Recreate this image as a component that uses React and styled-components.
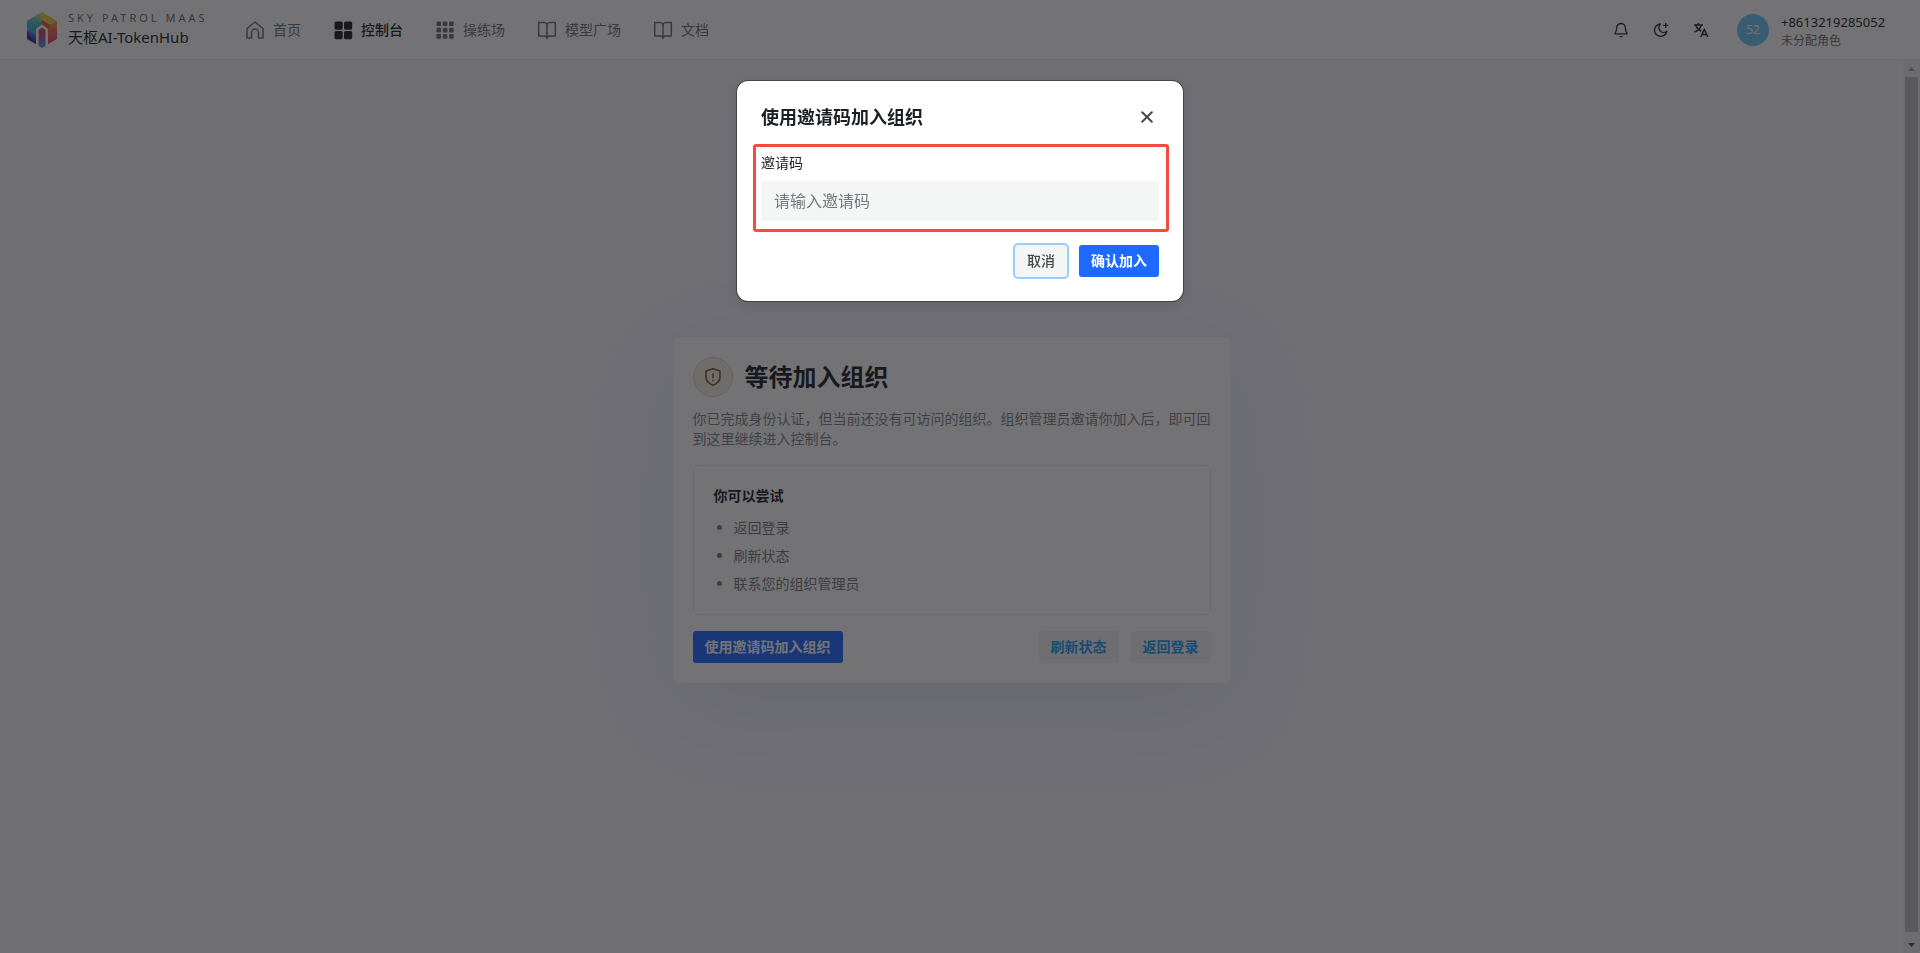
import React from 'react';
import styled, { createGlobalStyle } from 'styled-components';

const GlobalStyle = createGlobalStyle`
  * {
    box-sizing: border-box;
  }

  html,
  body {
    margin: 0;
    height: 100%;
    overflow: hidden;
  }

  #root {
    height: 100%;
  }

  body,
  button,
  input {
    font-family: 'Noto Sans', 'Noto Sans CJK SC', sans-serif;
  }

  body {
    font-size: 14px;
    line-height: 20px;
    color: #1c1f23;
    background: #f4f4fb;
  }
`;

const Page = styled.div`
  height: 100vh;
  display: flex;
  flex-direction: column;
`;

const Header = styled.header`
  height: 60px;
  flex: none;
  display: flex;
  align-items: center;
  justify-content: space-between;
  padding: 0 32px 0 24px;
  background: #fff;
  border-bottom: 1px solid #eaeaf2;
`;

const HeaderLeft = styled.div`
  display: flex;
  align-items: center;
`;

const Brand = styled.a`
  width: 221px;
  display: flex;
  align-items: center;
  gap: 8px;
  color: inherit;
  text-decoration: none;
`;

const BrandText = styled.span`
  display: flex;
  flex-direction: column;
  padding-bottom: 2px;
  white-space: nowrap;
`;

const BrandTag = styled.span`
  font-size: 11px;
  line-height: 16px;
  letter-spacing: 3px;
  color: #6b6c70;
`;

const BrandName = styled.span`
  font-size: 15px;
  line-height: 22px;
`;

const Nav = styled.nav`
  display: flex;
  align-items: center;
  gap: 32px;
`;

const NavItem = styled.a`
  display: flex;
  align-items: center;
  gap: 8px;
  color: ${({ $active }) => ($active ? '#1c1f23' : '#6e7074')};
  font-weight: ${({ $active }) => ($active ? 500 : 400)};
  text-decoration: none;
`;

const HeaderRight = styled.div`
  display: flex;
  align-items: center;
  gap: 8px;
`;

const IconButton = styled.button`
  width: 32px;
  height: 32px;
  display: flex;
  align-items: center;
  justify-content: center;
  padding: 0;
  border: 0;
  background: transparent;
  color: #2b2e33;
`;

const User = styled.div`
  display: flex;
  align-items: center;
  gap: 12px;
  margin-left: 12px;
`;

const Avatar = styled.span`
  width: 32px;
  height: 32px;
  display: flex;
  align-items: center;
  justify-content: center;
  border-radius: 50%;
  background: #6cc8f5;
  color: #fff;
  font-size: 12px;
`;

const UserText = styled.span`
  min-width: 107px;
  display: flex;
  flex-direction: column;
  padding-top: 2px;
`;

const UserPhone = styled.span`
  font-size: 13px;
  line-height: 20px;
`;

const UserRole = styled.span`
  font-size: 12px;
  line-height: 18px;
  color: #6e7074;
`;

const Body = styled.div`
  flex: 1;
  min-height: 0;
  display: flex;
`;

const Main = styled.main`
  flex: 1;
  display: flex;
  align-items: center;
  justify-content: center;
  padding: 6px 24px 0;
`;

const Card = styled.section`
  width: 100%;
  max-width: 558px;
  padding: 20px;
  border-radius: 6px;
  background: #fff;
  box-shadow: 0 24px 100px rgba(15, 60, 60, 0.08);
`;

const CardHeader = styled.div`
  display: flex;
  align-items: center;
  gap: 12px;
`;

const ShieldBadge = styled.span`
  width: 40px;
  height: 40px;
  display: flex;
  align-items: center;
  justify-content: center;
  border: 1px solid #e8d3b4;
  border-radius: 50%;
  background: #f8eee2;
  color: #7a5c28;
`;

const CardTitle = styled.h1`
  margin: 0;
  font-size: 24px;
  line-height: 32px;
  font-weight: 700;
`;

const CardDesc = styled.p`
  margin: 12px 0 16px;
  color: #808287;
`;

const Tips = styled.div`
  padding: 20px;
  border: 1px solid #ebecee;
  border-radius: 6px;
`;

const TipsTitle = styled.h2`
  margin: 0 0 12px;
  font-size: 14px;
  line-height: 20px;
  font-weight: 700;
`;

const TipsList = styled.ul`
  display: flex;
  flex-direction: column;
  gap: 8px;
  margin: 0;
  padding-left: 20px;
  color: #77797e;
`;

const CardActions = styled.div`
  display: flex;
  gap: 12px;
  margin-top: 16px;

  & > :first-child {
    margin-right: auto;
  }
`;

const buttonColors = {
  primary: { bg: '#1e69ff', fg: '#fff' },
  tertiary: { bg: '#f4f5f5', fg: '#46484c' },
  light: { bg: '#f4f5f5', fg: '#1c9bf5' },
};

const Button = styled.button`
  height: 32px;
  padding: 0 12px;
  border: 0;
  border-radius: 3px;
  background: ${({ $kind }) => buttonColors[$kind].bg};
  color: ${({ $kind }) => buttonColors[$kind].fg};
  font-size: 14px;
  line-height: 20px;
  font-weight: ${({ $kind }) => ($kind === 'tertiary' ? 500 : 700)};
  box-shadow: ${({ $focused }) => ($focused ? '0 0 0 2px #98cdfd' : 'none')};
  white-space: nowrap;
`;

const ScrollTrack = styled.div`
  width: 17px;
  display: flex;
  flex-direction: column;
  align-items: center;
  background: #f1f1f1;
`;

const ScrollArrow = styled.span`
  height: 17px;
  display: flex;
  align-items: center;
  color: ${({ $dim }) => ($dim ? '#a3a3a3' : '#505050')};
`;

const ScrollThumb = styled.div`
  flex: 1;
  width: 13px;
  margin-bottom: 4px;
  background: #c1c1c1;
`;

const Overlay = styled.div`
  position: fixed;
  inset: 0;
  display: flex;
  align-items: flex-start;
  justify-content: center;
  padding-top: 80px;
  background: rgba(22, 22, 26, 0.6);
`;

const Dialog = styled.div`
  width: 448px;
  padding: 24px;
  border: 1px solid rgba(28, 31, 35, 0.5);
  border-radius: 12px;
  background: #fff;
  background-clip: padding-box;
  box-shadow: 0 4px 14px rgba(0, 0, 0, 0.1);
`;

const DialogHeader = styled.div`
  display: flex;
  align-items: center;
  justify-content: space-between;
  margin-bottom: 24px;
`;

const DialogTitle = styled.h2`
  margin: 0;
  font-size: 18px;
  line-height: 24px;
  font-weight: 700;
`;

const CloseButton = styled(IconButton)`
  width: 24px;
  height: 24px;
  color: #46484c;
`;

const Field = styled.div`
  position: relative;
  display: flex;
  flex-direction: column;
  gap: 8px;
`;

const Highlight = styled.span`
  position: absolute;
  inset: -9px -10px -11px -8px;
  border: 3px solid #f44d40;
  border-radius: 3px;
  pointer-events: none;
`;

const Input = styled.input`
  width: 100%;
  height: 40px;
  padding: 0 13px;
  border: 0;
  border-radius: 3px;
  background: #f4f5f5;
  font-size: 16px;
  outline: 0;

  &::placeholder {
    color: #77797c;
    opacity: 1;
  }
`;

const DialogFooter = styled.div`
  display: flex;
  justify-content: flex-end;
  gap: 12px;
  margin-top: 24px;
`;

const Logo = () => (
  <svg width="36" height="40" viewBox="0 0 36 40" aria-hidden="true">
    <defs>
      <linearGradient id="logoTop" x1="0" y1="0.6" x2="1" y2="0.4">
        <stop offset="0" stopColor="#2fb5c9" />
        <stop offset="0.35" stopColor="#7cc9a0" />
        <stop offset="0.55" stopColor="#f0cf52" />
        <stop offset="1" stopColor="#f2b544" />
      </linearGradient>
      <linearGradient id="logoLeft" x1="0" y1="0" x2="0" y2="1">
        <stop offset="0" stopColor="#2fb0cf" />
        <stop offset="0.5" stopColor="#3d86dc" />
        <stop offset="1" stopColor="#4b25a0" />
      </linearGradient>
      <linearGradient id="logoRight" x1="0" y1="0" x2="0" y2="1">
        <stop offset="0" stopColor="#f2a03c" />
        <stop offset="0.5" stopColor="#ec6a4c" />
        <stop offset="1" stopColor="#d9327c" />
      </linearGradient>
      <linearGradient id="logoCore" x1="0" y1="0" x2="0" y2="1">
        <stop offset="0" stopColor="#e03a58" />
        <stop offset="0.5" stopColor="#b0509a" />
        <stop offset="1" stopColor="#4aa3e8" />
      </linearGradient>
    </defs>
    <path d="M3 11 18 2 33 11 26 17 18 11 10 17Z" fill="url(#logoTop)" />
    <path d="M3 11 10 15 18 10 18 15 12 19 12 34 3 29Z" fill="url(#logoLeft)" />
    <path d="M10 15 18 10v5l-6 4v6L3 20V11Z" fill="#5ad0c0" opacity="0.45" />
    <path d="M33 11v18l-9 5V19l-6-4v-5l8 5Z" fill="url(#logoRight)" />
    <path d="M18 10 26 15 24 19 18 15Z" fill="#e0602e" />
    <path d="M3 21 12 34 3 29Z" fill="#3b1d96" opacity="0.7" />
    <path d="M12 19 18 14.500 24 19V34.500L22 35.500V21L18 18 14 21V35.500L12 34.500Z" fill="#fff" />
    <path d="M14.600 20 18 17.500 21.400 20V36L18 38 14.600 36Z" fill="url(#logoCore)" />
  </svg>
);

const HomeIcon = () => (
  <svg width="20" height="20" viewBox="0 0 20 20" fill="none" stroke="currentColor" strokeWidth="1.5" strokeLinejoin="round" aria-hidden="true">
    <path d="M2 8.500 10 2l8 6.500V18h-4.500v-5.500a3.500 3.500 0 0 0-7 0V18H2Z" />
  </svg>
);

const ConsoleIcon = () => (
  <svg width="20" height="20" viewBox="0 0 20 20" fill="currentColor" aria-hidden="true">
    <rect x="1.500" y="1.500" width="8.200" height="8.200" rx="1.600" />
    <rect x="11" y="1.500" width="8.200" height="8.200" rx="1.600" />
    <rect x="1.500" y="11" width="8.200" height="8.200" rx="1.600" />
    <rect x="11" y="11" width="8.200" height="8.200" rx="1.600" />
  </svg>
);

const GridIcon = () => (
  <svg width="20" height="20" viewBox="0 0 20 20" fill="currentColor" aria-hidden="true">
    {[1.5, 7.8, 14.1].map((y) =>
      [1.5, 7.8, 14.1].map((x) => <rect key={`${x}-${y}`} x={x} y={y} width="4.6" height="4.6" rx="1" />)
    )}
  </svg>
);

const BookIcon = () => (
  <svg width="20" height="20" viewBox="0 0 20 20" fill="none" stroke="currentColor" strokeWidth="1.5" strokeLinejoin="round" aria-hidden="true">
    <path d="M10 4.500C9.500 3 8.500 2.500 7 2.500H1.700V16H7.500C9 16 10 16.500 10 18.500 10 16.500 11 16 12.500 16H18.300V2.500H13C11.500 2.500 10.500 3 10 4.500Z" />
    <path d="M10 4.500V18" />
  </svg>
);

const BellIcon = () => (
  <svg width="16" height="16" viewBox="0 0 16 16" fill="none" stroke="currentColor" strokeWidth="1.3" strokeLinecap="round" strokeLinejoin="round" aria-hidden="true">
    <path d="M8 1.500a4.300 4.300 0 0 0-4.300 4.300c0 2.800-.8 4.200-1.900 6h12.400c-1.100-1.800-1.900-3.200-1.900-6A4.300 4.300 0 0 0 8 1.500Z" />
    <path d="M7 14.600h2" />
  </svg>
);

const MoonIcon = () => (
  <svg width="16" height="16" viewBox="0 0 16 16" fill="none" stroke="currentColor" strokeWidth="1.4" strokeLinecap="round" strokeLinejoin="round" aria-hidden="true">
    <path d="M7.500 2A6.200 6.200 0 1 0 13.800 9.200 4.400 4.400 0 0 1 7.500 2Z" />
    <path d="M12.700 1.400v4M10.700 3.400h4" />
  </svg>
);

const TranslateIcon = () => (
  <svg width="16" height="16" viewBox="0 0 16 16" fill="none" stroke="currentColor" strokeWidth="1.5" strokeLinejoin="round" aria-hidden="true">
    <path d="M1 3h9M5.500 1v2M2.800 3.200C3.800 6.200 6 8.200 8.200 9.200M8.300 3.200C7.300 6.200 4.500 8.800 1.400 10" />
    <path d="M7.800 15 11.300 7.200 14.800 15M9 12.500h4.600" />
  </svg>
);

const ShieldIcon = () => (
  <svg width="20" height="20" viewBox="0 0 20 20" fill="none" stroke="currentColor" strokeWidth="1.6" strokeLinecap="round" strokeLinejoin="round" aria-hidden="true">
    <path d="M10 1.700 3 4v6c0 4 3 6.800 7 8.300 4-1.500 7-4.300 7-8.300V4Z" />
    <path d="M10 6.500v4M10 13.300v.100" />
  </svg>
);

const CloseIcon = () => (
  <svg width="12" height="12" viewBox="0 0 12 12" stroke="currentColor" strokeWidth="2" strokeLinecap="round" aria-hidden="true">
    <path d="M1.200 1.200l9.600 9.600M10.800 1.200l-9.600 9.600" />
  </svg>
);

const navItems = [
  { label: '首页', icon: HomeIcon },
  { label: '控制台', icon: ConsoleIcon, active: true },
  { label: '操练场', icon: GridIcon },
  { label: '模型广场', icon: BookIcon },
  { label: '文档', icon: BookIcon },
];

const tips = ['返回登录', '刷新状态', '联系您的组织管理员'];

const InviteDialog = () => (
  <Overlay>
    <Dialog role="dialog" aria-modal="true" aria-labelledby="invite-title">
      <DialogHeader>
        <DialogTitle id="invite-title">使用邀请码加入组织</DialogTitle>
        <CloseButton type="button" aria-label="关闭">
          <CloseIcon />
        </CloseButton>
      </DialogHeader>
      <Field>
        <label htmlFor="invite-code">邀请码</label>
        <Input id="invite-code" type="text" placeholder="请输入邀请码" />
        <Highlight />
      </Field>
      <DialogFooter>
        <Button type="button" $kind="tertiary" $focused>取消</Button>
        <Button type="button" $kind="primary">确认加入</Button>
      </DialogFooter>
    </Dialog>
  </Overlay>
);

const App = () => {
  return (
    <>
      <GlobalStyle />
      <Page>
        <Header>
          <HeaderLeft>
            <Brand href="#">
              <Logo />
              <BrandText>
                <BrandTag>SKY PATROL MAAS</BrandTag>
                <BrandName>天枢AI-TokenHub</BrandName>
              </BrandText>
            </Brand>
            <Nav>
              {navItems.map(({ label, icon: Icon, active }) => (
                <NavItem key={label} href="#" $active={active}>
                  <Icon />
                  {label}
                </NavItem>
              ))}
            </Nav>
          </HeaderLeft>
          <HeaderRight>
            <IconButton type="button" aria-label="通知"><BellIcon /></IconButton>
            <IconButton type="button" aria-label="切换主题"><MoonIcon /></IconButton>
            <IconButton type="button" aria-label="切换语言"><TranslateIcon /></IconButton>
            <User>
              <Avatar>52</Avatar>
              <UserText>
                <UserPhone>+8613219285052</UserPhone>
                <UserRole>未分配角色</UserRole>
              </UserText>
            </User>
          </HeaderRight>
        </Header>

        <Body>
          <Main>
            <Card>
              <CardHeader>
                <ShieldBadge><ShieldIcon /></ShieldBadge>
                <CardTitle>等待加入组织</CardTitle>
              </CardHeader>
              <CardDesc>
                你已完成身份认证，但当前还没有可访问的组织。组织管理员邀请你加入后，即可回到这里继续进入控制台。
              </CardDesc>
              <Tips>
                <TipsTitle>你可以尝试</TipsTitle>
                <TipsList>
                  {tips.map((tip) => (
                    <li key={tip}>{tip}</li>
                  ))}
                </TipsList>
              </Tips>
              <CardActions>
                <Button type="button" $kind="primary">使用邀请码加入组织</Button>
                <Button type="button" $kind="light">刷新状态</Button>
                <Button type="button" $kind="light">返回登录</Button>
              </CardActions>
            </Card>
          </Main>
          <ScrollTrack aria-hidden="true">
            <ScrollArrow $dim>
              <svg width="7" height="4" viewBox="0 0 7 4" fill="currentColor"><path d="M0 4 3.500 0 7 4Z" /></svg>
            </ScrollArrow>
            <ScrollThumb />
            <ScrollArrow>
              <svg width="7" height="4" viewBox="0 0 7 4" fill="currentColor"><path d="M0 0 3.500 4 7 0Z" /></svg>
            </ScrollArrow>
          </ScrollTrack>
        </Body>
      </Page>
      <InviteDialog />
    </>
  );
};

export default App;
